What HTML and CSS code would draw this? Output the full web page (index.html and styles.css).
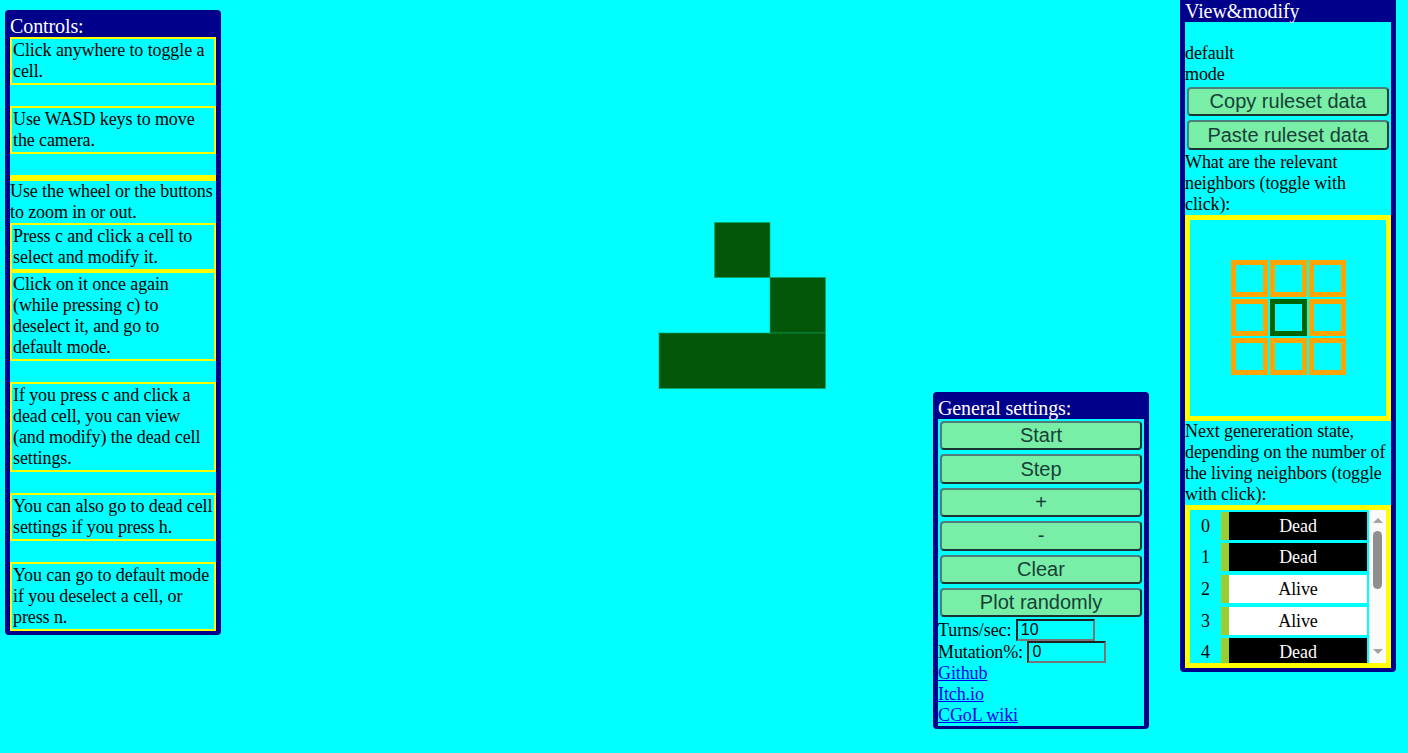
FILE: index.html
```html
<!DOCTYPE html>
<html>
<head>
<meta charset="utf-8">
<title>Game of Life</title>
<link rel="stylesheet" href="styles.css">
</head>
<body>
<svg class="board" width="1408" height="753" viewBox="0 0 1408 753">
  <rect class="cell" x="714.5" y="222.5" width="55.5" height="55"/>
  <rect class="cell" x="770" y="277.5" width="55.5" height="55.5"/>
  <rect class="cell" x="659" y="333" width="55.5" height="55.5"/>
  <rect class="cell" x="714.5" y="333" width="55.5" height="55.5"/>
  <rect class="cell" x="770" y="333" width="55.5" height="55.5"/>
  <rect class="fill" x="660" y="334" width="165" height="54"/>
</svg>

<div class="panel controls">
  <div class="ptitle">Controls:</div>
  <div class="pbody">
    <div class="tip">Click anywhere to toggle a cell.</div>
    <div class="blank"></div>
    <div class="tip">Use WASD keys to move the camera.</div>
    <div class="blank"></div>
    <div class="tipbar"></div>
    <div class="plain">Use the wheel or the buttons to zoom in or out.</div>
    <div class="tip">Press c and click a cell to select and modify it.</div>
    <div class="tip">Click on it once again (while pressing c) to deselect it, and go to<br>default mode.</div>
    <div class="blank"></div>
    <div class="tip">If you press c and click a dead cell, you can view (and modify) the dead cell settings.</div>
    <div class="blank"></div>
    <div class="tip">You can also go to dead cell settings if you press h.</div>
    <div class="blank"></div>
    <div class="tip">You can go to default mode if you deselect a cell, or press n.</div>
  </div>
</div>

<div class="panel general">
  <div class="ptitle">General settings:</div>
  <div class="pbody">
    <button class="btn">Start</button>
    <button class="btn">Step</button>
    <button class="btn">+</button>
    <button class="btn">-</button>
    <button class="btn">Clear</button>
    <button class="btn">Plot randomly</button>
    <div class="field">Turns/sec: <input class="num" type="text" value="10"></div>
    <div class="field">Mutation%: <input class="num" type="text" value="0"></div>
    <div class="line"><a href="#">Github</a></div>
    <div class="line"><a href="#">Itch.io</a></div>
    <div class="line"><a href="#">CGoL wiki</a></div>
  </div>
</div>

<div class="panel view">
  <div class="ptitle">View&amp;modify</div>
  <div class="pbody">
    <div class="blank"></div>
    <div class="plain">default<br>mode</div>
    <button class="btn">Copy ruleset data</button>
    <button class="btn">Paste ruleset data</button>
    <div class="plain">What are the relevant neighbors (toggle with click):</div>
    <div class="neigh">
      <div class="ngrid">
        <div class="nb"></div><div class="nb"></div><div class="nb"></div>
        <div class="nb"></div><div class="nb self"></div><div class="nb"></div>
        <div class="nb"></div><div class="nb"></div><div class="nb"></div>
      </div>
    </div>
    <div class="plain">Next genereration state, depending on the number of the living neighbors (toggle with click):</div>
    <div class="states">
      <div class="slist">
        <div class="srow"><span class="sn">0</span><span class="sbar"></span><span class="sv dead">Dead</span></div>
        <div class="srow"><span class="sn">1</span><span class="sbar"></span><span class="sv dead">Dead</span></div>
        <div class="srow"><span class="sn">2</span><span class="sbar"></span><span class="sv alive">Alive</span></div>
        <div class="srow"><span class="sn">3</span><span class="sbar"></span><span class="sv alive">Alive</span></div>
        <div class="srow"><span class="sn">4</span><span class="sbar"></span><span class="sv dead">Dead</span></div>
        <div class="srow"><span class="sn">5</span><span class="sbar"></span><span class="sv dead">Dead</span></div>
        <div class="srow"><span class="sn">6</span><span class="sbar"></span><span class="sv dead">Dead</span></div>
        <div class="srow"><span class="sn">7</span><span class="sbar"></span><span class="sv dead">Dead</span></div>
        <div class="srow"><span class="sn">8</span><span class="sbar"></span><span class="sv dead">Dead</span></div>
      </div>
      <div class="sbarv">
        <span class="arr up"></span>
        <span class="thumb"></span>
        <span class="arr down"></span>
      </div>
    </div>
  </div>
</div>
</body>
</html>
```
FILE: styles.css
```css
html, body {
  margin: 0;
  padding: 0;
}
body {
  width: 1408px;
  height: 753px;
  overflow: hidden;
  background: #00ffff;
  font-family: "Liberation Serif", "Times New Roman", serif;
  font-size: 18px;
  line-height: 21px;
  letter-spacing: -0.1px;
  color: #000;
  position: relative;
}

.board {
  position: absolute;
  left: 0;
  top: 0;
}
.board .cell {
  fill: #035708;
  stroke: #10a060;
  stroke-width: 1;
  stroke-opacity: 0.6;
}
.board .fill {
  fill: #035708;
}

.panel {
  position: absolute;
  background: #00008b;
  border-radius: 4px;
  padding: 5px 5px 4px 5px;
  width: 206px;
}
.controls {
  left: 5px;
  top: 10px;
}
.general {
  left: 933px;
  top: 392px;
  padding-bottom: 3px;
}
.view {
  left: 1180px;
  top: -5px;
}

.ptitle {
  color: #fff;
  font-size: 20px;
  line-height: 22px;
  white-space: nowrap;
}
.pbody {
  background: #00ffff;
  display: flex;
  flex-direction: column;
}

.tip {
  border: 2px solid #ffff00;
  padding: 1px 0 1px 1px;
}
.tipbar {
  height: 6px;
  background: #ffff00;
}
.blank {
  height: 21px;
}
.plain {
  padding: 0;
}

.btn {
  display: block;
  margin: 2px 2px;
  height: 29.4px;
  padding: 1px 6px;
  box-sizing: border-box;
  background: #78eea6;
  border: 2px solid;
  border-color: #4f7d7a #1f3b39 #1a3431 #4f7d7a;
  border-radius: 4px;
  font-family: "Liberation Sans", Arial, sans-serif;
  font-size: 20px;
  line-height: 23px;
  letter-spacing: 0;
  color: #173f38;
  text-align: center;
}

.field {
  height: 22px;
  line-height: 22px;
  white-space: nowrap;
}
.num {
  box-sizing: border-box;
  width: 79px;
  height: 22px;
  margin: 0;
  padding: 1px 3px;
  vertical-align: top;
  background: transparent;
  border: 2px solid;
  border-color: #222 #767676 #767676 #222;
  font-family: "Liberation Sans", Arial, sans-serif;
  font-size: 16px;
  line-height: 18px;
  letter-spacing: 0;
  color: #000;
}
.line {
  height: 21px;
}
.line a {
  color: #0000ee;
  text-decoration: underline;
}

.neigh {
  box-sizing: border-box;
  height: 206px;
  border: 5px solid #ffff00;
  display: flex;
  align-items: center;
  justify-content: center;
}
.ngrid {
  display: grid;
  grid-template-columns: repeat(3, 37px);
  grid-template-rows: repeat(3, 37px);
  gap: 2px;
}
.nb {
  border: 5px solid #ffa500;
}
.nb.self {
  border-color: #006400;
}

.states {
  box-sizing: border-box;
  height: 163px;
  border: 5px solid #ffff00;
  display: flex;
}
.slist {
  flex: 1;
  overflow: hidden;
  padding-top: 2px;
  display: flex;
  flex-direction: column;
  gap: 3.6px;
}
.srow {
  display: flex;
  height: 28px;
  flex: none;
  padding-right: 2px;
}
.sn {
  width: 31px;
  text-align: center;
  line-height: 28px;
}
.sbar {
  width: 8px;
  background: #9acd32;
}
.sv {
  flex: 1;
  text-align: center;
  line-height: 28px;
}
.sv.dead {
  background: #000;
  color: #fff;
}
.sv.alive {
  background: #fff;
  color: #000;
}

.sbarv {
  width: 17px;
  background: #fafafa;
  position: relative;
}
.arr {
  position: absolute;
  left: 4px;
  width: 0;
  height: 0;
  border-left: 5px solid transparent;
  border-right: 5px solid transparent;
}
.arr.up {
  top: 8px;
  border-bottom: 5px solid #a3a3a3;
}
.arr.down {
  top: 139px;
  border-top: 5px solid #a3a3a3;
}
.thumb {
  position: absolute;
  left: 4px;
  top: 21px;
  width: 9px;
  height: 58px;
  border-radius: 5px;
  background: #8f8f8f;
}
```
